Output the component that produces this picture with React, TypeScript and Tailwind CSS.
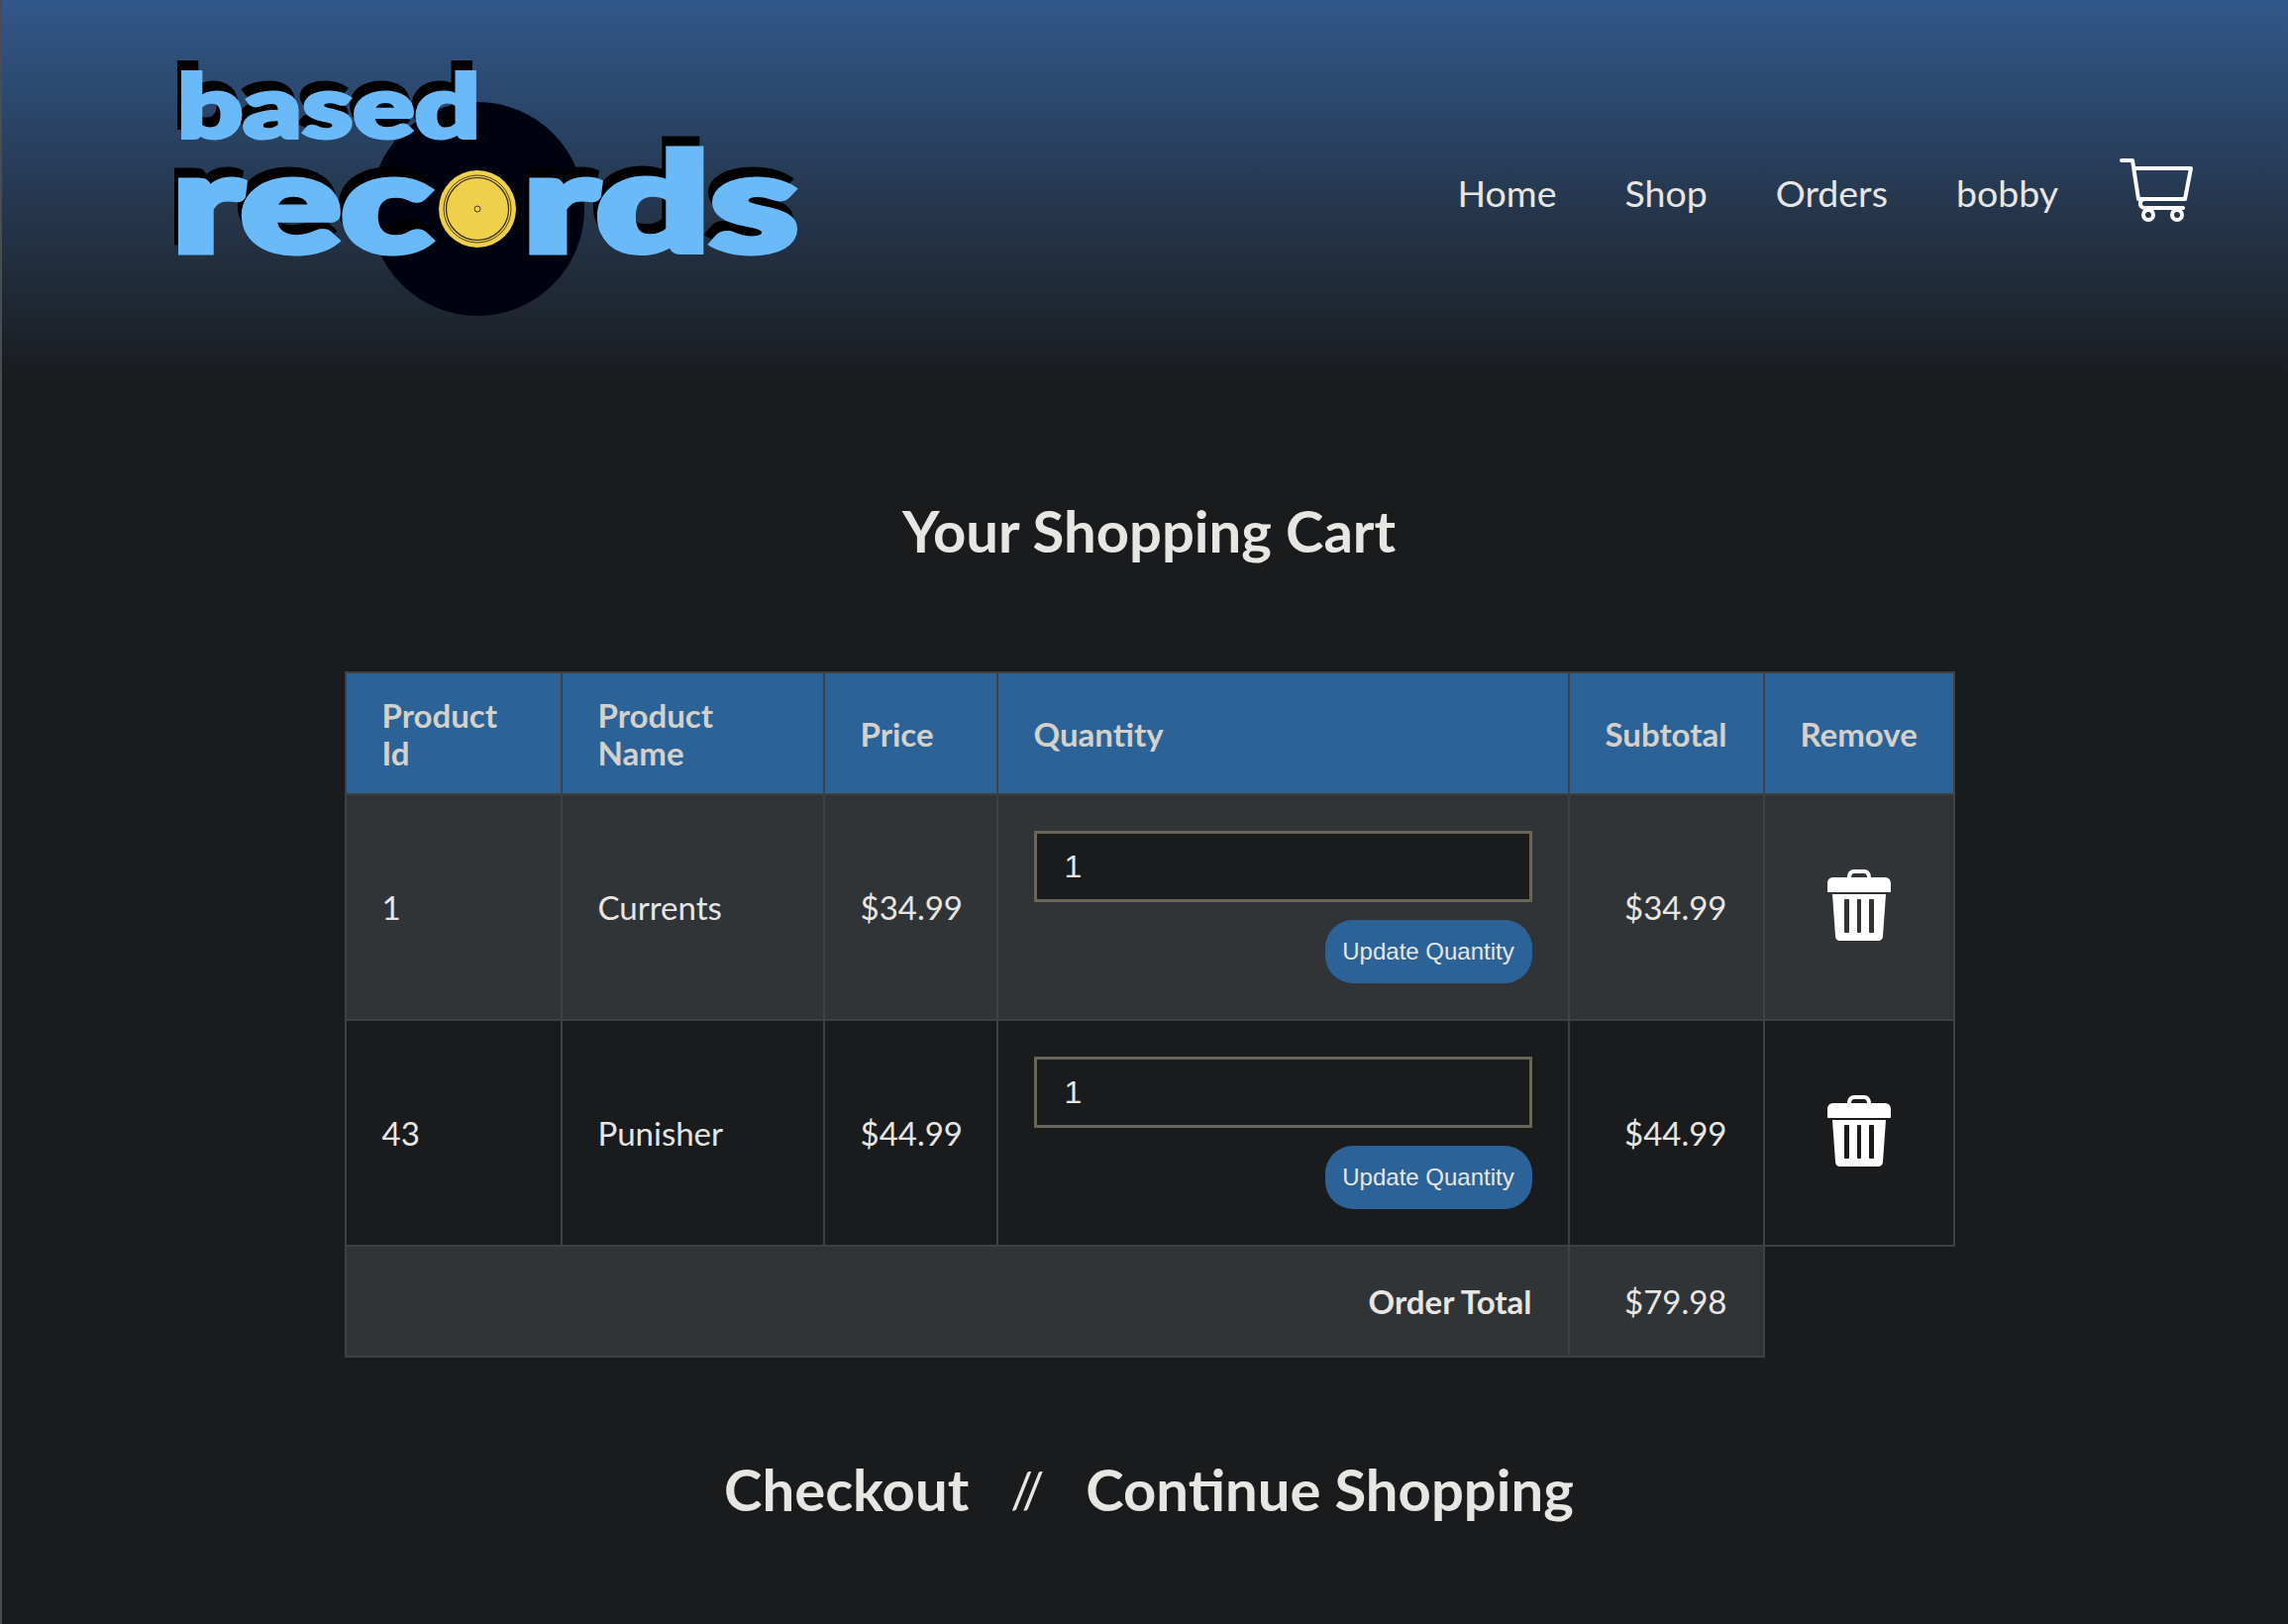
const font = { fontFamily: "Lato, sans-serif" };

const CartIcon = () => (
  <svg width="74" height="66" viewBox="0 0 74 66" fill="none" stroke="#fff" strokeWidth="4" strokeLinecap="round" strokeLinejoin="round">
    <path d="M2 3h11l6 39" />
    <path d="M15 11h57l-6 31H21" />
    <path d="M64 51H26c-7 0-7-9 0-9" />
    <circle cx="29" cy="58" r="5" />
    <circle cx="58" cy="58" r="5" />
  </svg>
);

const TrashIcon = () => (
  <svg width="64" height="72" viewBox="0 0 64 72" fill="#fff" className="mx-auto mb-[4px]">
    <path fillRule="evenodd" d="M20 8c0-5 3-8 7-8h10c4 0 7 3 7 8h14c3 0 6 2 6 6v8c0 .6-.5 1-1 1H1c-.5 0-1-.4-1-1v-8c0-4 3-6 6-6zm4 0h16c0-2-1-4-3-4H27c-2 0-3 2-3 4z" />
    <path fillRule="evenodd" d="M5 25h54l-3 42c0 3-2 5-5 5H13c-3 0-5-2-5-5zM18 30h3a1 1 0 0 1 1 1v32a1 1 0 0 1-1 1h-3a1 1 0 0 1-1-1V31a1 1 0 0 1 1-1zM31 30h2a1 1 0 0 1 1 1v32a1 1 0 0 1-1 1h-2a1 1 0 0 1-1-1V31a1 1 0 0 1 1-1zM43 30h3a1 1 0 0 1 1 1v32a1 1 0 0 1-1 1h-3a1 1 0 0 1-1-1V31a1 1 0 0 1 1-1z" />
  </svg>
);

const Logo = () => (
  <svg width="650" height="260" viewBox="0 0 650 260" className="block overflow-visible">
    <circle cx="310" cy="145" r="108" fill="#00030f" />
    <g fontFamily="Lato, sans-serif" fontWeight="900" strokeLinejoin="miter">
      <text x="3" y="63" fontSize="88" textLength="306" lengthAdjust="spacingAndGlyphs" fill="#000" stroke="#000" strokeWidth="4">based</text>
      <text x="7" y="73" fontSize="88" textLength="306" lengthAdjust="spacingAndGlyphs" fill="#6abaf9" stroke="#6abaf9" strokeWidth="4">based</text>
      <text x="-2" y="178" fontSize="138" textLength="262" lengthAdjust="spacingAndGlyphs" fill="#000" stroke="#000" strokeWidth="7">rec</text>
      <text x="2" y="188" fontSize="138" textLength="262" lengthAdjust="spacingAndGlyphs" fill="#6abaf9" stroke="#6abaf9" strokeWidth="7">rec</text>
      <text x="352" y="178" fontSize="138" textLength="278" lengthAdjust="spacingAndGlyphs" fill="#000" stroke="#000" strokeWidth="7">rds</text>
      <text x="356" y="188" fontSize="138" textLength="278" lengthAdjust="spacingAndGlyphs" fill="#6abaf9" stroke="#6abaf9" strokeWidth="7">rds</text>
    </g>
    <circle cx="310" cy="145" r="39" fill="#f0d04a" />
    <circle cx="310" cy="145" r="34" fill="none" stroke="#4a3f14" strokeWidth="1" />
    <circle cx="310" cy="145" r="31.5" fill="none" stroke="#2a2510" strokeWidth="1.2" />
    <circle cx="310" cy="145" r="3" fill="none" stroke="#4a3f14" strokeWidth="1" />
  </svg>
);

const rows = [
  { id: "1", name: "Currents", price: "$34.99", bg: "bg-[#313437]" },
  { id: "43", name: "Punisher", price: "$44.99", bg: "bg-[#191b1d]" },
];

const th = "border-2 border-[#3e4144] px-9 py-[22.5px] text-left align-middle font-bold text-[33px] leading-[38px] text-[#d4d0ca]";
const td = "border-2 border-[#3e4144] p-9 text-[33px] leading-[40px] text-[#e8e6e3] align-middle";

export default function App() {
  return (
    <div className="min-h-[1640px] border-l-2 border-[#4a4d50] bg-[#191b1d] text-[#e8e6e3]" style={font}>
      <header className="flex h-[390px] items-start justify-between bg-gradient-to-b from-[#31588b] to-[#191b1d] pl-[170px] pr-[96px] pt-[66px]">
        <Logo />
        <nav className="flex items-center gap-[69px] pt-[93px] text-[37.5px] leading-[44px]">
          <a className="mt-[6px]">Home</a>
          <a className="mt-[6px]">Shop</a>
          <a className="mt-[6px]">Orders</a>
          <a className="mt-[6px] mr-[-7px]">bobby</a>
          <CartIcon />
        </nav>
      </header>

      <main className="flex flex-col items-center">
        <h1 className="ml-[8px] mt-[114px] text-center text-[58px] font-bold leading-[64px]">Your Shopping Cart</h1>

        <table className="ml-[9px] mt-[110px] w-[1624px] table-fixed border-collapse">
          <thead>
            <tr className="bg-[#2b6399]">
              <th className={`${th} w-[218px]`}>Product Id</th>
              <th className={`${th} w-[265px]`}>Product Name</th>
              <th className={`${th} w-[175px]`}>Price</th>
              <th className={`${th} w-[577px]`}>Quantity</th>
              <th className={`${th} w-[197px]`}>Subtotal</th>
              <th className={`${th} w-[192px]`}>Remove</th>
            </tr>
          </thead>
          <tbody>
            {rows.map((r) => (
              <tr key={r.id} className={r.bg}>
                <td className={td}>{r.id}</td>
                <td className={td}>{r.name}</td>
                <td className={td}>{r.price}</td>
                <td className={td}>
                  <div className="flex flex-col items-end gap-[18px]">
                    <input
                      readOnly
                      value="1"
                      className="h-[72px] w-full border-[3px] border-[#6b6559] bg-[#191b1d] px-[28px] text-[32px] text-[#e8e6e3] outline-none"
                      style={{ fontFamily: '"Liberation Sans", sans-serif' }}
                    />
                    <button
                      className="h-[64px] w-[209px] rounded-[28px] bg-[#2b6399] text-[24px] text-[#e8e6e3]"
                      style={{ fontFamily: '"Liberation Sans", sans-serif' }}
                    >
                      Update Quantity
                    </button>
                  </div>
                </td>
                <td className={`${td} text-right`}>{r.price}</td>
                <td className={td}>
                  <TrashIcon />
                </td>
              </tr>
            ))}
            <tr>
              <td colSpan={4} className={`${td} bg-[#313437] py-[35px] text-right font-bold`}>Order Total</td>
              <td className={`${td} bg-[#313437] py-[35px] text-right`}>$79.98</td>
            </tr>
          </tbody>
        </table>

        <div className="ml-[8px] mt-[101px] flex items-center gap-[42px] text-[58px] font-bold leading-[64px]">
          <a>Checkout</a>
          <span className="text-[50px] font-normal">//</span>
          <a>Continue Shopping</a>
        </div>
      </main>
    </div>
  );
}
